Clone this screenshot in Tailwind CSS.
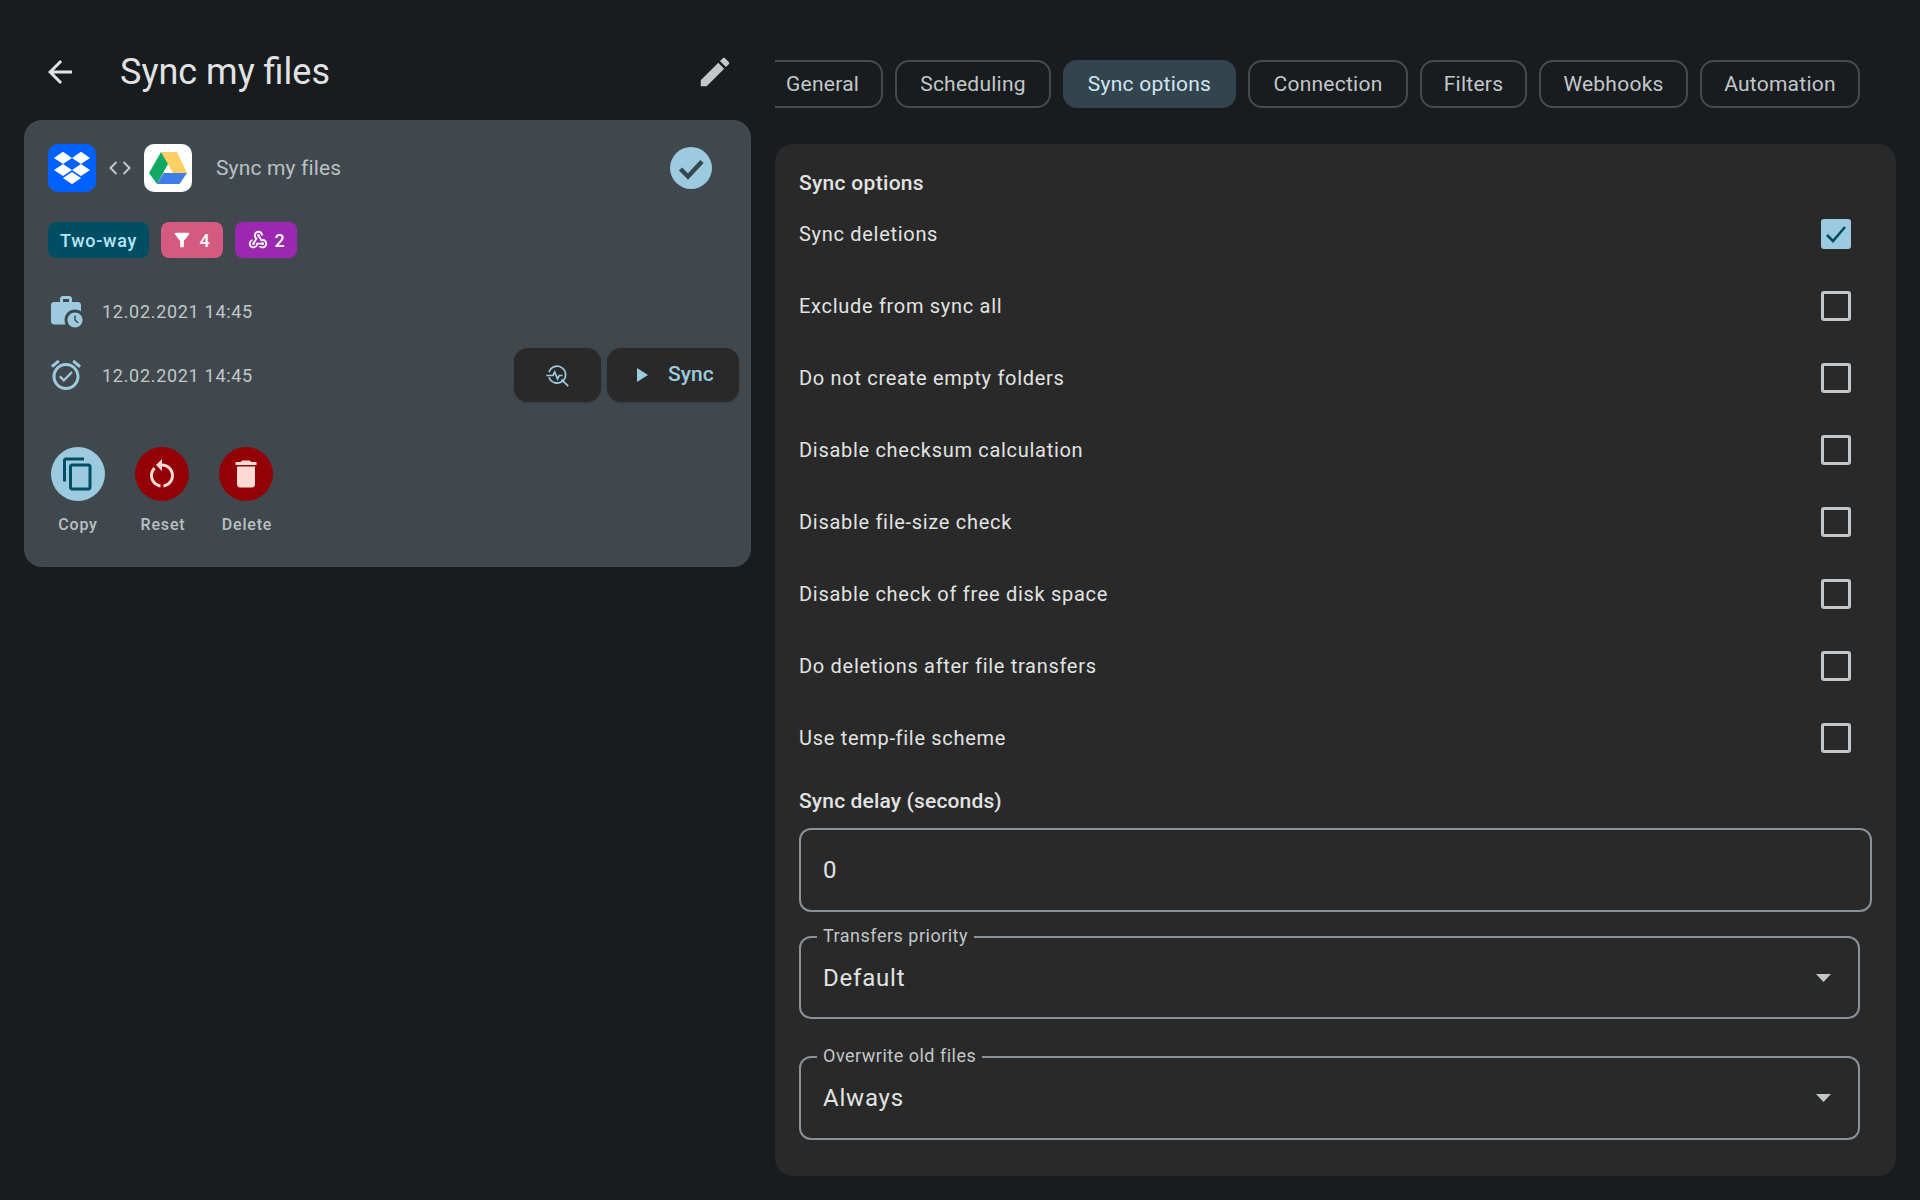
<!DOCTYPE html>
<html lang="en">
  <head>
    <meta charset="UTF-8" />
    <title>Sync my files</title>
    <script src="https://cdn.jsdelivr.net/npm/@tailwindcss/browser@4"></script>
  </head>
  <body class="bg-[#191c1e] font-[Roboto,sans-serif] h-[1200px] overflow-hidden text-[#e1e3e3]">
    <div class="flex">
      <!-- left column -->
      <div class="w-[775px] shrink-0 pl-6 pr-6">
        <div class="flex items-center h-[120px] pt-6">
          <svg class="w-9 h-9 ml-[18px] fill-[#e1e3e3]" viewBox="0 0 24 24"><path d="M20 11H7.83l5.59-5.59L12 4l-8 8 8 8 1.41-1.41L7.83 13H20v-2z"/></svg>
          <h1 class="ml-[42px] text-[36px] leading-[44px] flex-1">Sync my files</h1>
          <svg class="w-[38px] h-[38px] mr-[17px] fill-[#c1c7ca]" viewBox="0 0 24 24"><path d="M3 17.25V21h3.75L17.81 9.94l-3.75-3.75L3 17.25zM20.71 7.04c.39-.39.39-1.02 0-1.41l-2.34-2.34c-.39-.39-1.02-.39-1.41 0l-1.83 1.83 3.75 3.75 1.83-1.83z"/></svg>
        </div>

        <div class="bg-[#41484d] rounded-[18px] h-[447px] pl-6 pr-3 pt-6">
          <div class="flex items-center h-12">
            <div class="w-12 h-12 rounded-[10px] bg-[#0061ff] flex items-center justify-center">
              <svg class="w-9 h-[38px] fill-white" preserveAspectRatio="none" viewBox="0 0 24 24"><path d="M6 1.807L0 5.629l6 3.822 6.001-3.822L6 1.807zM18 1.807l-6 3.822 6 3.822 6-3.822-6-3.822zM0 13.274l6 3.822 6.001-3.822L6 9.452l-6 3.822zM18 9.452l-6 3.822 6 3.822 6-3.822-6-3.822zM6 18.371l6.001 3.822 6-3.822-6-3.822L6 18.371z"/></svg>
            </div>
            <svg class="w-12 h-12 fill-none stroke-[#c1c7ca]" stroke-width="2" viewBox="0 0 48 48"><path d="M20.5 18l-6 6 6 6M27.5 18l6 6-6 6"/></svg>
            <div class="w-12 h-12 rounded-[10px] bg-white">
              <svg class="w-12 h-12" viewBox="0 0 48 48">
                <polygon points="17,8 33,8 43,29 29,29" fill="#ffcf63"/>
                <polygon points="17,8 24,20 13,40 5,29" fill="#11a861"/>
                <polygon points="19.500,29 43,29 35.500,40 13,40" fill="#3f7ee8"/>
              </svg>
            </div>
            <span class="ml-6 pt-px text-[21px] tracking-[0.15px] text-[#b9c0c4] flex-1">Sync my files</span>
            <svg class="w-[42px] h-[42px] mr-[27px]" viewBox="0 0 42 42">
              <circle cx="21" cy="21" r="21" fill="#9ccadf"/>
              <path d="M10.500 22l7.500 7.500 14-15" fill="none" stroke="#36474f" stroke-width="4.500"/>
            </svg>
          </div>

          <div class="flex gap-3 mt-[30px]">
            <span class="h-9 w-[101px] rounded-lg bg-[#004e64] text-[#b5e6f8] text-[18px] font-medium tracking-[0.7px] flex items-center justify-center">Two-way</span>
            <span class="h-9 w-[62px] rounded-lg bg-[#d45a80] text-white text-[18px] font-medium flex items-center justify-center gap-[6px] pr-[3px]">
              <svg class="w-[22px] h-[22px] fill-white" viewBox="0 0 24 24"><path d="M4.250 5.610C6.270 8.200 10 13 10 13v6c0 .55.45 1 1 1h2c.55 0 1-.45 1-1v-6s3.720-4.800 5.740-7.390c.51-.66.04-1.610-.79-1.610H5.040c-.83 0-1.300.95-.79 1.610z"/></svg>4</span>
            <span class="h-9 w-[62px] rounded-lg bg-[#9c27b0] text-white text-[18px] font-medium flex items-center justify-center gap-[5px]">
              <svg class="w-[22px] h-[22px] fill-white" viewBox="0 0 24 24"><path d="M10 15h5.880c.27-.31.67-.5 1.120-.5.83 0 1.500.67 1.500 1.500s-.67 1.500-1.500 1.500c-.44 0-.84-.19-1.120-.5H11.900c-.46 2.280-2.480 4-4.900 4-2.760 0-5-2.240-5-5 0-2.420 1.720-4.440 4-4.900v2.070c-1.160.41-2 1.530-2 2.830 0 1.650 1.350 3 3 3s3-1.350 3-3v-1zm2.500-11c1.650 0 3 1.350 3 3h2c0-2.760-2.240-5-5-5s-5 2.240-5 5c0 1.430.6 2.710 1.550 3.620l-2.350 3.900c-.68.14-1.200.75-1.200 1.480 0 .83.67 1.500 1.500 1.500s1.500-.67 1.500-1.500c0-.16-.02-.31-.07-.45l3.380-5.630C10.490 9.610 9.500 8.420 9.500 7c0-1.650 1.350-3 3-3zm4.500 9c-.64 0-1.230.2-1.720.54l-3.050-5.070C11.530 8.350 11 7.740 11 7c0-.83.67-1.500 1.500-1.500S14 6.170 14 7c0 .15-.02.29-.06.43l2.190 3.650c.28-.05.57-.08.87-.08 2.760 0 5 2.240 5 5s-2.240 5-5 5c-1.850 0-3.470-1.010-4.330-2.500h2.670c.48.32 1.050.5 1.660.5 1.650 0 3-1.350 3-3s-1.350-3-3-3z"/></svg>2</span>
          </div>

          <div class="flex items-center h-9 mt-[35px]">
            <svg class="w-9 h-9 fill-[#9ccadf]" viewBox="0 0 24 24"><path d="M18 11c1.490 0 2.870.47 4 1.260V8c0-1.110-.89-2-2-2h-4V4c0-1.110-.89-2-2-2h-4C8.890 2 8 2.890 8 4v2H4C2.890 6 2.010 6.890 2.010 8L2 19c0 1.110.89 2 2 2h7.680C11.250 20.090 11 19.080 11 18c0-3.870 3.130-7 7-7zM10 4h4v2h-4V4zM18 13c-2.760 0-5 2.240-5 5s2.240 5 5 5 5-2.240 5-5-2.240-5-5-5zm1.650 7.350l-2.150-2.150V15h1v2.790l1.850 1.850-.7.710z"/></svg>
            <span class="ml-[18px] text-[18px] tracking-[0.7px] text-[#c1c7ca]">12.02.2021 14:45</span>
          </div>

          <div class="flex items-center h-[54px] mt-[19px]">
            <svg class="w-9 h-9 fill-[#9ccadf]" viewBox="0 0 24 24"><path d="M22 5.720l-4.600-3.860-1.290 1.530 4.600 3.860L22 5.720zM7.880 3.390L6.600 1.860 2 5.710l1.290 1.530 4.590-3.850zM12 4c-4.970 0-9 4.030-9 9s4.020 9 9 9c4.970 0 9-4.030 9-9s-4.030-9-9-9zm0 16c-3.870 0-7-3.130-7-7s3.130-7 7-7 7 3.130 7 7-3.130 7-7 7zm-1.460-5.470L8.410 12.400l-1.060 1.060 3.180 3.180 6-6-1.060-1.060-4.930 4.950z"/></svg>
            <span class="ml-[18px] text-[18px] tracking-[0.7px] text-[#c1c7ca] flex-1">12.02.2021 14:45</span>
            <button class="w-[87px] h-[54px] rounded-[14px] bg-[#292929] flex items-center justify-center shadow-sm">
              <svg class="w-[27px] h-[27px] fill-none stroke-[#9ccadf]" stroke-width="1.500" viewBox="0 0 24 24"><path d="M4.500 9a7.500 7.500 0 1 1 0 4.500M15.500 15.500L21.500 21.500M2 12h6l1.500-3 2.500 6 1.500-3h3"/></svg>
            </button>
            <button class="ml-[6px] w-[132px] h-[54px] rounded-[14px] bg-[#292929] flex items-center pl-[22px] text-[#9ccadf] text-[21px] font-medium shadow-sm">
              <svg class="w-6 h-6 fill-[#9ccadf]" viewBox="0 0 24 24"><path d="M8 5v14l11-7z"/></svg>
              <span class="ml-[15px]">Sync</span>
            </button>
          </div>

          <div class="flex mt-[45px] ml-[3px] gap-[30px]">
            <div class="w-[54px] flex flex-col items-center">
              <div class="w-[54px] h-[54px] rounded-full bg-[#9ccadf] flex items-center justify-center">
                <svg class="w-9 h-9 fill-[#004e64]" viewBox="0 0 24 24"><path d="M16 1H4c-1.100 0-2 .9-2 2v14h2V3h12V1zm3 4H8c-1.100 0-2 .9-2 2v14c0 1.100.9 2 2 2h11c1.100 0 2-.9 2-2V7c0-1.100-.9-2-2-2zm0 16H8V7h11v14z"/></svg>
              </div>
              <span class="mt-[12px] text-[16px] leading-[24px] font-medium tracking-[0.8px] text-[#b9c0c4]">Copy</span>
            </div>
            <div class="w-[54px] flex flex-col items-center">
              <div class="w-[54px] h-[54px] rounded-full bg-[#930006] flex items-center justify-center">
                <svg class="w-9 h-9 fill-[#ffdad4]" viewBox="0 0 24 24"><path d="M12 5V2L8 6l4 4V7c3.310 0 6 2.690 6 6 0 2.970-2.170 5.430-5 5.910v2.020c3.950-.49 7-3.860 7-7.930 0-4.420-3.580-8-8-8zm-6 8c0-1.650.67-3.150 1.760-4.240L6.340 7.340C4.900 8.790 4 10.790 4 13c0 4.080 3.050 7.440 7 7.930v-2.020c-2.830-.48-5-2.940-5-5.910z"/></svg>
              </div>
              <span class="mt-[12px] text-[16px] leading-[24px] font-medium tracking-[0.8px] text-[#b9c0c4] pl-[2px]">Reset</span>
            </div>
            <div class="w-[54px] flex flex-col items-center">
              <div class="w-[54px] h-[54px] rounded-full bg-[#930006] flex items-center justify-center">
                <svg class="w-9 h-9 fill-[#ffdad4]" viewBox="0 0 24 24"><path d="M6 19c0 1.100.9 2 2 2h8c1.100 0 2-.9 2-2V7H6v12zM19 4h-3.500l-1-1h-5l-1 1H5v2h14V4z"/></svg>
              </div>
              <span class="mt-[12px] text-[16px] leading-[24px] font-medium tracking-[0.8px] text-[#b9c0c4] pl-[2px]">Delete</span>
            </div>
          </div>
        </div>
      </div>

      <!-- right column -->
      <div class="w-[1121px] shrink-0">
        <div class="flex gap-3 h-12 mt-[60px] overflow-hidden text-[21px] tracking-[0.25px] text-[#c1c7ca]">
          <div class="w-[108px] shrink-0 h-12 pt-px rounded-r-[14px] border-2 border-l-0 border-[#48484e] flex items-center pl-[11px]">General</div>
          <div class="w-[156px] shrink-0 h-12 pt-px rounded-[14px] border-2 border-[#48484e] flex items-center justify-center">Scheduling</div>
          <div class="w-[173px] shrink-0 h-12 pt-px rounded-[14px] bg-[#33444f] text-[#cfe6f1] flex items-center justify-center">Sync options</div>
          <div class="w-[160px] shrink-0 h-12 pt-px rounded-[14px] border-2 border-[#48484e] flex items-center justify-center">Connection</div>
          <div class="w-[107px] shrink-0 h-12 pt-px rounded-[14px] border-2 border-[#48484e] flex items-center justify-center">Filters</div>
          <div class="w-[149px] shrink-0 h-12 pt-px rounded-[14px] border-2 border-[#48484e] flex items-center justify-center">Webhooks</div>
          <div class="w-[160px] shrink-0 h-12 pt-px rounded-[14px] border-2 border-[#48484e] flex items-center justify-center">Automation</div>
        </div>

        <div class="mt-9 h-[1032px] rounded-[18px] bg-[#292929] px-6 pt-6">
          <div class="text-[21px] leading-[30px] font-medium tracking-[0.3px] text-[#e1e3e3]">Sync options</div>

          <div class="flex items-center justify-between h-[72px] text-[20px] tracking-[0.7px]">
            <span>Sync deletions</span>
            <span class="mr-[21px] w-[30px] h-[30px] rounded-[3px] bg-[#9ccadf] flex items-center justify-center">
              <svg class="w-6 h-6 fill-none stroke-[#004e64]" stroke-width="2.600" viewBox="0 0 24 24"><path d="M3 13l6 6L21 5"/></svg>
            </span>
          </div>
          <div class="flex items-center justify-between h-[72px] text-[20px] tracking-[0.7px]">
            <span>Exclude from sync all</span>
            <span class="mr-[21px] w-[30px] h-[30px] rounded-[3px] border-[3px] border-[#c1c7ca]"></span>
          </div>
          <div class="flex items-center justify-between h-[72px] text-[20px] tracking-[0.7px]">
            <span>Do not create empty folders</span>
            <span class="mr-[21px] w-[30px] h-[30px] rounded-[3px] border-[3px] border-[#c1c7ca]"></span>
          </div>
          <div class="flex items-center justify-between h-[72px] text-[20px] tracking-[0.7px]">
            <span>Disable checksum calculation</span>
            <span class="mr-[21px] w-[30px] h-[30px] rounded-[3px] border-[3px] border-[#c1c7ca]"></span>
          </div>
          <div class="flex items-center justify-between h-[72px] text-[20px] tracking-[0.7px]">
            <span>Disable file-size check</span>
            <span class="mr-[21px] w-[30px] h-[30px] rounded-[3px] border-[3px] border-[#c1c7ca]"></span>
          </div>
          <div class="flex items-center justify-between h-[72px] text-[20px] tracking-[0.7px]">
            <span>Disable check of free disk space</span>
            <span class="mr-[21px] w-[30px] h-[30px] rounded-[3px] border-[3px] border-[#c1c7ca]"></span>
          </div>
          <div class="flex items-center justify-between h-[72px] text-[20px] tracking-[0.7px]">
            <span>Do deletions after file transfers</span>
            <span class="mr-[21px] w-[30px] h-[30px] rounded-[3px] border-[3px] border-[#c1c7ca]"></span>
          </div>
          <div class="flex items-center justify-between h-[72px] text-[20px] tracking-[0.7px]">
            <span>Use temp-file scheme</span>
            <span class="mr-[21px] w-[30px] h-[30px] rounded-[3px] border-[3px] border-[#c1c7ca]"></span>
          </div>

          <div class="mt-3 text-[21px] leading-[30px] font-medium tracking-[0.15px]">Sync delay (seconds)</div>
          <div class="mt-3 h-[84px] rounded-[12px] border-2 border-[#8b9198] flex items-center pl-[22px] text-[24px] tracking-[0.5px]">0</div>

          <div class="relative mt-6 mr-3 h-[83px] rounded-[12px] border-2 border-[#8b9198] flex items-center justify-between pl-[22px] pr-[27px] text-[24px] tracking-[0.8px]">
            <span class="absolute left-[16px] -top-[14px] bg-[#292929] px-[6px] text-[18px] leading-[24px] tracking-[0.5px] text-[#c1c7ca]">Transfers priority</span>
            <span>Default</span>
            <svg class="w-[15px] h-2 fill-[#c1c7ca]" viewBox="0 0 15 8"><path d="M0 0h15L7.500 8z"/></svg>
          </div>

          <div class="relative mt-[37px] mr-3 h-[84px] rounded-[12px] border-2 border-[#8b9198] flex items-center justify-between pl-[22px] pr-[27px] text-[24px] tracking-[0.8px]">
            <span class="absolute left-[16px] -top-[14px] bg-[#292929] px-[6px] text-[18px] leading-[24px] tracking-[0.5px] text-[#c1c7ca]">Overwrite old files</span>
            <span>Always</span>
            <svg class="w-[15px] h-2 fill-[#c1c7ca]" viewBox="0 0 15 8"><path d="M0 0h15L7.500 8z"/></svg>
          </div>
        </div>
      </div>
    </div>
  </body>
</html>
